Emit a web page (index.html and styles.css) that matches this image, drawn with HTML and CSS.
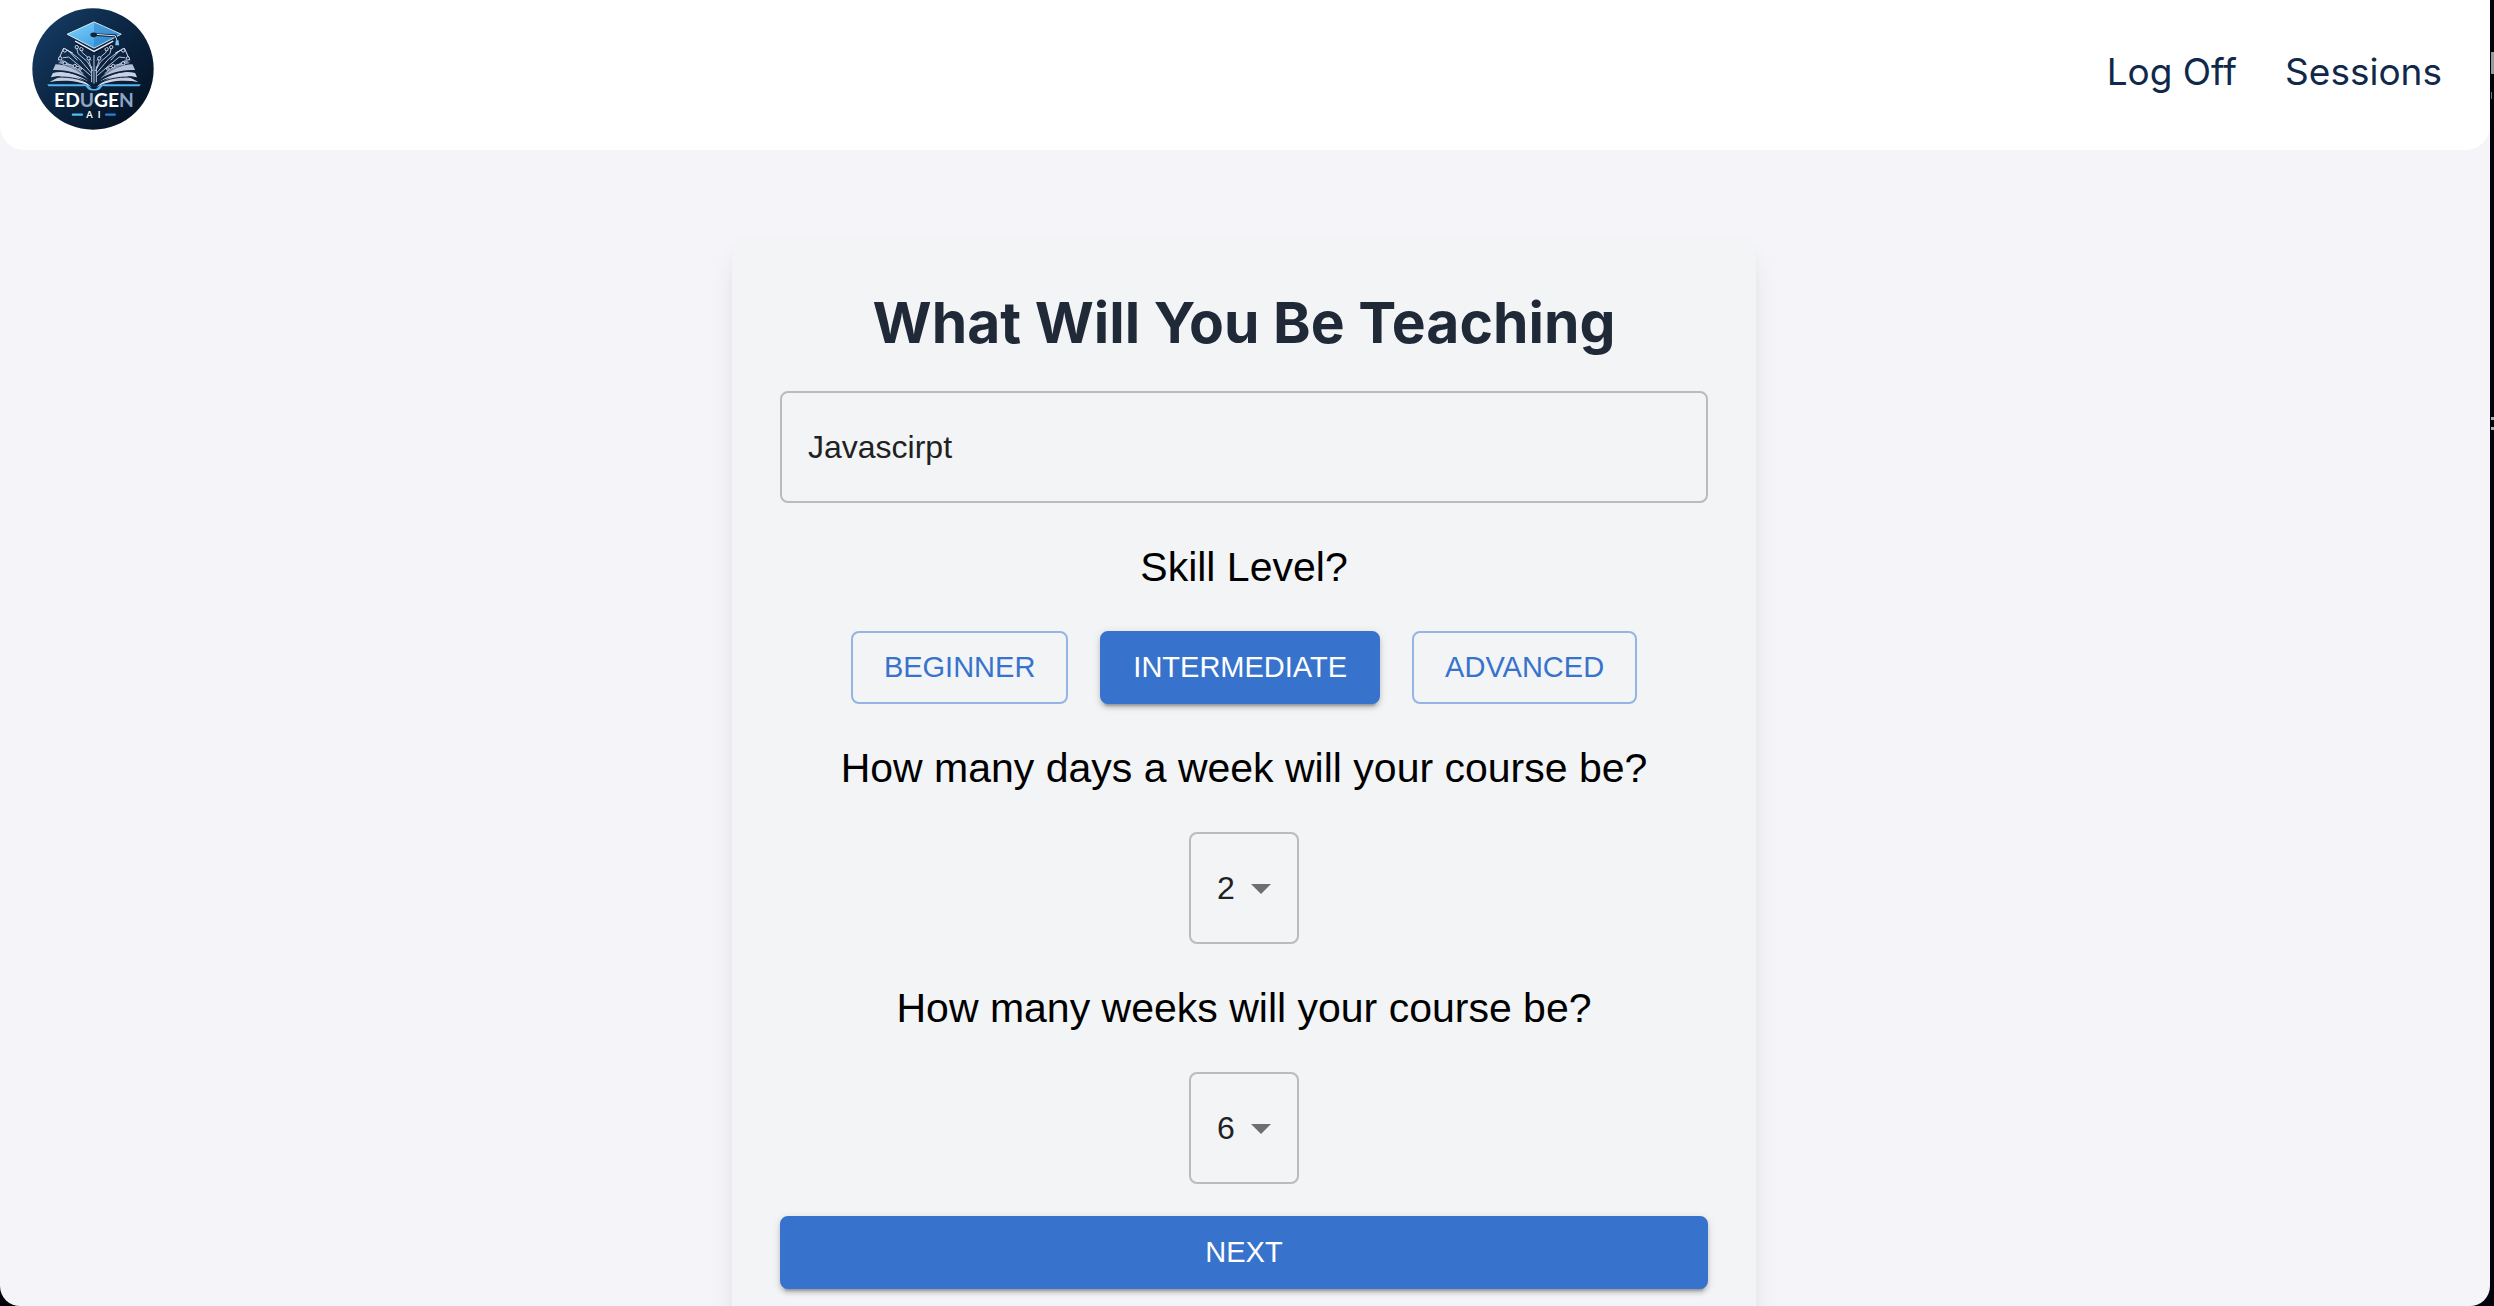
FILE: index.html
```html
<!DOCTYPE html>
<html lang="en">
<head>
<meta charset="utf-8">
<title>EduGen AI</title>
<link rel="stylesheet" href="styles.css">
</head>
<body>
<div class="window">
  <header class="header">
    <a class="brand" href="#" aria-label="EduGen AI home">
      <svg class="logo" viewBox="96 24 366 368" aria-hidden="true">
        <defs>
          <linearGradient id="disc" x1="0" y1="0" x2="1" y2="1"><stop offset="0" stop-color="#17406a"/><stop offset=".5" stop-color="#0b2440"/><stop offset="1" stop-color="#020d1c"/></linearGradient>
          <linearGradient id="cap" x1="0" y1="0" x2="1" y2="1"><stop offset="0" stop-color="#7fd3fb"/><stop offset="1" stop-color="#2f8fdc"/></linearGradient>
          <linearGradient id="page" x1="0" y1="0" x2="0" y2="1"><stop offset="0" stop-color="#a9b6d3"/><stop offset="1" stop-color="#eef1f8"/></linearGradient>
          <g id="half">
            <path d="M274 262C246 236 212 220 188 226L148 247C190 240 238 242 274 262Z" fill="url(#page)"/>
            <path d="M266 246C238 224 190 210 158 220L152 233C194 224 238 232 266 246Z" fill="#c9d1e4"/>
            <path d="M262 236C234 210 196 194 166 194L158 211C198 210 236 220 262 236Z" fill="#b5c0da"/>
            <path d="M274 250C248 222 222 198 186 179L174 190C210 198 250 224 274 250Z" fill="#8493b5"/>
            <path d="M148 250C198 242 242 248 274 266M156 234C196 229 242 236 270 254M162 214C204 213 244 228 272 248" fill="none" stroke="#10203a" stroke-width="3"/>
            <path d="M190 146L204 152L238 178L274 220M188 174L206 172L240 200L272 228M196 192L216 196L250 222M230 146L234 162L262 186L278 214M244 146L246 158L274 182M266 180L274 206M206 154L232 182M222 198L240 202" fill="none" stroke="#b9c5dd" stroke-width="3"/>
            <path d="M190 146L174 182M190 146L218 160" stroke="#dfe5f2" stroke-width="3"/>
            <g fill="#10294a" stroke="#d4dcec" stroke-width="3"><circle cx="194" cy="152" r="5"/><circle cx="180" cy="176" r="5"/><circle cx="194" cy="191" r="5"/><circle cx="230" cy="142" r="5"/><circle cx="244" cy="148" r="5"/><circle cx="266" cy="176" r="5"/><circle cx="224" cy="199" r="5"/><circle cx="240" cy="208" r="4"/></g>
            <path d="M141 254H254Q266 256 270 263T282 268V273Q266 273 261 265T250 260H145Z" fill="#55b5f0"/>
          </g>
        </defs>
        <circle cx="279" cy="208" r="183" fill="url(#disc)"/>
        <use href="#half"/>
        <use href="#half" transform="matrix(-1 0 0 1 564 0)"/>
        <path d="M282 166V252M275 200V248M289 200V248" stroke="#c6d0e4" stroke-width="3"/>
        <path d="M226 122L282 153L340 122V132L282 162L226 132Z" fill="#07152b"/>
        <path d="M225 124L282 155L340 124" fill="none" stroke="#e9eef6" stroke-width="4"/>
        <path d="M282 66L364 103L282 145L201 103Z" fill="url(#cap)" stroke="#d9ecf9" stroke-width="3"/>
        <path d="M282 68L362 103L282 143Z" fill="#2678bf" opacity=".45"/>
        <path d="M280 104L346 108L352 123" fill="none" stroke="#07152b" stroke-width="8"/>
        <path d="M280 103L346 108L352 123" fill="none" stroke="#e5eef8" stroke-width="3"/>
        <ellipse cx="281" cy="105" rx="10" ry="7" fill="#13213a"/>
        <path d="M348 121H356L358 136H346Z" fill="#73c7f5"/>
        <text class="logo-name" x="282" y="323" text-anchor="middle">ED<tspan class="logo-dim">U</tspan>GE<tspan class="logo-dim">N</tspan></text>
        <text class="logo-sub" x="259" y="356">A</text>
        <text class="logo-sub" x="293" y="356">I</text>
        <rect x="215" y="342" width="34" height="7" rx="3" fill="#52bdf4"/>
        <rect x="315" y="342" width="33" height="7" rx="3" fill="#2d7fd8"/>
      </svg>
    </a>
    <nav class="nav">
      <a class="nav-link" href="#">Log Off</a>
      <a class="nav-link" href="#">Sessions</a>
    </nav>
  </header>
  <main class="main">
    <form class="card">
      <h1 class="title"><label for="topic">What Will You Be Teaching</label></h1>
      <input class="field" id="topic" type="text" value="Javascirpt">
      <h2 class="question">Skill Level?</h2>
      <div class="levels">
        <button class="button" type="button">BEGINNER</button>
        <button class="button button-filled" type="button">INTERMEDIATE</button>
        <button class="button" type="button">ADVANCED</button>
      </div>
      <label class="question" for="days">How many days a week will your course be?</label>
      <div class="picker">
        <select class="select" id="days"><option>1</option><option selected>2</option><option>3</option><option>4</option><option>5</option></select>
        <svg class="arrow" viewBox="0 0 20 10" aria-hidden="true"><path d="M0 0H20L10 10Z"/></svg>
      </div>
      <label class="question" for="weeks">How many weeks will your course be?</label>
      <div class="picker">
        <select class="select" id="weeks"><option>2</option><option>4</option><option selected>6</option><option>8</option></select>
        <svg class="arrow" viewBox="0 0 20 10" aria-hidden="true"><path d="M0 0H20L10 10Z"/></svg>
      </div>
      <button class="button button-filled button-wide" type="submit">NEXT</button>
    </form>
  </main>
</div>
</body>
</html>
```
FILE: styles.css
```css
* { box-sizing: border-box; }

body {
  margin: 0;
  height: 100vh;
  overflow: hidden;
  padding-right: 4px;
  /* marks of the desktop behind the window, along its right edge */
  background:
    linear-gradient(#999, #999) right 0 top 52px / 3px 22px no-repeat,
    linear-gradient(#777, #777) right 2px top 92px / 1px 7px no-repeat,
    linear-gradient(#aaa, #aaa) right 0 top 417px / 3px 3px no-repeat,
    linear-gradient(#aaa, #aaa) right 0 top 427px / 3px 3px no-repeat,
    #01020c;
  font-family: "Liberation Sans", Arial, sans-serif;
}

.window {
  height: 100%;
  overflow: hidden;
  background: #f4f4f9;
  border-radius: 0 0 20px 20px;
}

.header {
  display: flex;
  align-items: flex-start;
  justify-content: space-between;
  height: 150px;
  padding: 8px 48px 0 32px;
  background: #fff;
  border-radius: 0 0 24px 24px;
}

.brand { display: block; height: 122px; }
.logo { display: block; width: 122px; height: 122px; }
.logo-name { font: 700 58px Lato, sans-serif; fill: #fff; }
.logo-dim { fill: #8fa6c6; }
.logo-sub { font: 700 28px Lato, sans-serif; fill: #fff; }

.nav { display: flex; gap: 48px; padding-top: 40px; }

.nav-link {
  font: 400 37px/48px Inter, sans-serif;
  color: #10294a;
  text-decoration: none;
}

.main {
  display: flex;
  justify-content: center;
  padding: 85px 2px 0 0;
}

.card {
  display: flex;
  flex-direction: column;
  align-items: center;
  width: 100%;
  max-width: 1024px;
  padding: 48px;
  background: #f3f4f6;
  border-radius: 16px;
  box-shadow: 0 20px 30px -6px rgba(0, 0, 0, 0.1), 0 8px 12px -4px rgba(0, 0, 0, 0.05);
}

.title {
  margin: 0 0 28px;
  font: 700 57px/80px Inter, sans-serif;
  color: #1f2937;
}

.field {
  width: 100%;
  height: 112px;
  padding: 0 26px;
  border: 2px solid #b9bbbd;
  border-radius: 8px;
  background: transparent;
  font: 400 32px/46px "Liberation Sans", Arial, sans-serif;
  color: #202122;
}

.question {
  margin: 32px 0;
  font-size: 41px;
  font-weight: 400;
  line-height: 64px;
  color: #000;
}

.levels { display: flex; gap: 32px; }

.button {
  height: 73px;
  padding: 0 31px 2px;
  border: 2px solid #94b4e4;
  border-radius: 8px;
  background: transparent;
  font: 400 29px/48px "Liberation Sans", Arial, sans-serif;
  color: #3773cc;
}

.button-filled {
  border-color: #3773cc;
  background: #3773cc;
  color: #fff;
  box-shadow: 0 6px 2px -4px rgba(0, 0, 0, 0.2), 0 4px 4px 0 rgba(0, 0, 0, 0.14), 0 2px 10px 0 rgba(0, 0, 0, 0.12);
}

.button-wide { width: 100%; margin-top: 32px; }

.picker { position: relative; }

.select {
  display: block;
  appearance: none;
  width: 110px;
  height: 112px;
  padding: 0 26px;
  border: 2px solid #b9bbbd;
  border-radius: 8px;
  background: transparent;
  font: 400 32px/46px "Liberation Sans", Arial, sans-serif;
  color: #202122;
}

.arrow {
  position: absolute;
  top: 52px;
  right: 28px;
  width: 20px;
  height: 10px;
  fill: #6d6e70;
  pointer-events: none;
}
```
